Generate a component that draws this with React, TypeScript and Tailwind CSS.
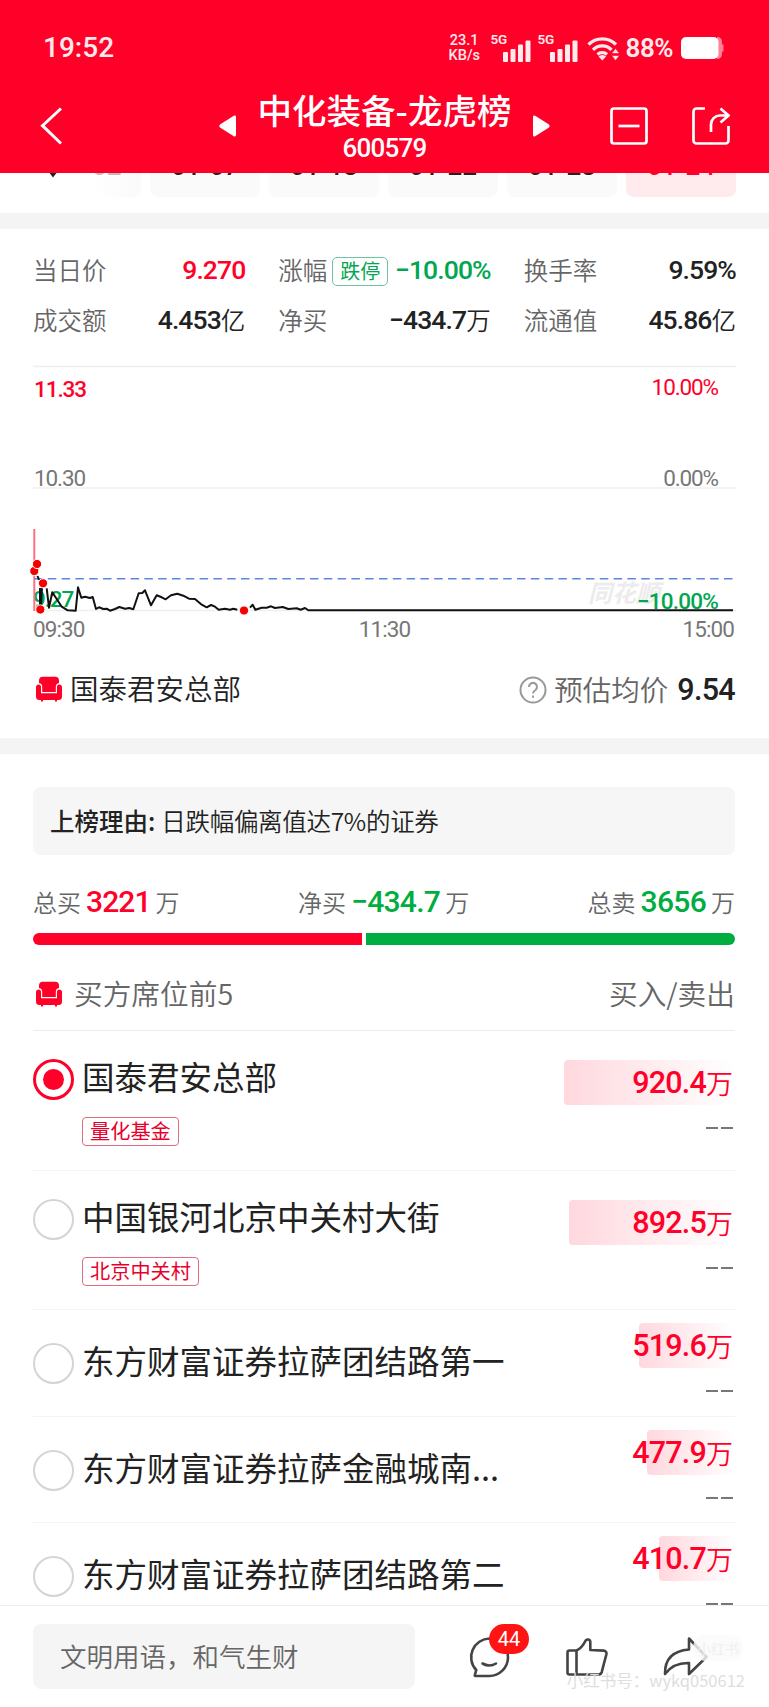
import { ReactNode } from "react";

type Seat = {
  name: string;
  amount: string;
  barWidth: number;
  tag?: string;
  checked?: boolean;
};

const seats: Seat[] = [
  { name: "国泰君安总部", amount: "920.4", barWidth: 171, tag: "量化基金", checked: true },
  { name: "中国银河北京中关村大街", amount: "892.5", barWidth: 166, tag: "北京中关村" },
  { name: "东方财富证券拉萨团结路第一", amount: "519.6", barWidth: 96 },
  { name: "东方财富证券拉萨金融城南...", amount: "477.9", barWidth: 88 },
  { name: "东方财富证券拉萨团结路第二", amount: "410.7", barWidth: 76 },
];

const dates = ["01-07", "01-13", "01-22", "01-23"];

const Num = ({ className = "", children }: { className?: string; children: ReactNode }) => (
  <span className={`[font-family:Roboto,sans-serif] font-medium ${className}`}>
    {children}
  </span>
);

const SofaIcon = () => (
  <svg width="26" height="26" viewBox="0 0 26 26" fill="#ff0029">
    <path d="M3 7V4.5A3.8 3.8 0 0 1 6.8.7h12.400A3.800 3.800 0 0 1 23 4.500V7a4 4 0 0 0-3.200 4v5H6.200v-5A4 4 0 0 0 3 7Z" />
    <path d="M2.800 8.500C4.300 8.500 5 9.700 5 11v6.300h16V11c0-1.300.7-2.500 2.300-2.500S26 9.700 26 11v9.500a3.500 3.500 0 0 1-3.500 3.500H21v1.500h-2V24H7v1.500H5V24H3.500A3.500 3.500 0 0 1 0 20.500V11c0-1.300 1.200-2.500 2.800-2.500Z" />
  </svg>
);

const SignalIcon = () => (
  <div className="relative h-[28px] w-[40px]">
    <Num className="absolute left-0 top-0 text-[13.500px] font-semibold leading-[11px] tracking-[-0.300px]">5G</Num>
    <svg className="absolute bottom-0 right-0" width="28" height="22" viewBox="0 0 28 22" fill="#fff" opacity=".92">
      <rect x="0" y="12" width="5" height="10" rx="1" />
      <rect x="7.500" y="9" width="5" height="13" rx="1" />
      <rect x="15" y="4.500" width="5" height="17.500" rx="1" />
      <rect x="22.500" y="0.500" width="5" height="21.500" rx="1" />
    </svg>
  </div>
);

const StatusBar = () => (
  <div className="flex h-[96px] items-center pl-[43px] pr-[44px] text-[#ffe9ec]">
    <Num className="text-[28px]">19:52</Num>
    <div className="ml-auto flex items-center">
      <Num className="mr-[11px] w-[31px] text-center text-[14.500px] font-bold leading-[15px]">
        23.1
        <br />
        KB/s
      </Num>
      <SignalIcon />
      <div className="w-[7px]" />
      <SignalIcon />
      <svg className="ml-[9px]" width="33" height="25" viewBox="0 0 33 25" fill="none" stroke="#ffe9ec" strokeWidth="3.200">
        <path d="M1.500 8.500a19.500 19.500 0 0 1 27.500 0" />
        <path d="M6 13.800a13 13 0 0 1 18.500 0" />
        <path d="M10.500 18.500a6.800 6.800 0 0 1 9.500 0" />
        <path d="m11.500 20.500 3.800 4 3.800-4a5.400 5.400 0 0 0-7.600 0Z" fill="#ffe9ec" stroke="none" />
        <path d="m28.500 12.500 4 5h-8Zm0 12-4-5h8Z" fill="#ffe9ec" stroke="#ff0029" strokeWidth=".6" />
      </svg>
      <Num className="ml-[6px] text-[26px] font-semibold tracking-[-0.500px]">88%</Num>
      <svg className="ml-[8px]" width="44" height="24" viewBox="0 0 44 24">
        <path d="M36 1h1a5 5 0 0 1 4 5v2.500h1.500v7H41V18a5 5 0 0 1-4 5h-1Z" fill="#ff8095" />
        <rect x="0" y="1" width="37.500" height="22" rx="5" fill="#fff" />
      </svg>
    </div>
  </div>
);

const Header = () => (
  <header className="h-[173px] bg-[#ff0029] text-white">
    <StatusBar />
    <div className="flex h-[60px] items-center pl-[40px] pr-[39px]">
      <svg width="22" height="38" viewBox="0 0 22 38" fill="none" stroke="#fff" strokeWidth="3">
        <path d="M21 1.500 2.500 18.700 21 36.500" />
      </svg>
      <svg className="ml-[157px]" width="18" height="22" viewBox="0 0 18 22" fill="#fff">
        <path d="M1 9.600 14.800.8Q17 0 17 2v18q0 2-2.200 1.200L1 12.400q-1.400-1.400 0-2.800Z" />
      </svg>
      <div className="ml-[21px] flex w-[253px] flex-col items-center whitespace-nowrap">
        <h1 className="text-[34.500px] font-medium leading-[42px]">中化装备-龙虎榜</h1>
        <Num className="mt-[2px] text-[26px] leading-[32px] tracking-[-0.800px]">600579</Num>
      </div>
      <svg className="ml-[22px]" width="18" height="22" viewBox="0 0 18 22" fill="#fff">
        <path d="M16 9.600 2.200.8Q0 0 0 2v18q0 2 2.200 1.200L16 12.400q1.400-1.400 0-2.800Z" />
      </svg>
      <svg className="ml-auto" width="38" height="38" viewBox="0 0 38 38" fill="none" stroke="#fff" strokeWidth="2.700">
        <rect x="1.500" y="1.500" width="35" height="35" rx="2.500" />
        <path d="M8.500 19h21" />
      </svg>
      <svg className="ml-[44px]" width="38" height="38" viewBox="0 0 38 38" fill="none" stroke="#fff" strokeWidth="2.700">
        <path d="M13 1.500H4.500a3 3 0 0 0-3 3v29a3 3 0 0 0 3 3h29a3 3 0 0 0 3-3V19" />
        <path d="M19 25v-7.500a9 9 0 0 1 9-9h8.500M28.500 1.500l8 7-8 7" />
      </svg>
    </div>
  </header>
);

const DateTabs = () => (
  <div className="flex h-[40px] overflow-hidden">
    <div className="-mt-[39px] flex h-[63px] w-full pl-[33px] text-[26px] text-[#222]">
      <div className="flex w-[59px] items-center pl-[14px]">
        <svg className="mt-[4px]" width="12" height="22" viewBox="0 0 14 24" fill="#222">
          <path d="M0 14h14l-7 9Z" />
        </svg>
      </div>
      <div className="flex w-[49px] items-center rounded-r-lg bg-linear-to-r from-white to-[#fafafa] text-[#bbb]">
        <Num>02</Num>
      </div>
      {dates.map((date) => (
        <div
          key={date}
          className="ml-[9px] flex w-[110px] items-center justify-center rounded-lg bg-[#fafafa]"
        >
          <Num>{date}</Num>
        </div>
      ))}
      <div className="ml-[9px] flex w-[110px] items-center justify-center rounded-lg bg-[#ffebee] text-[#ff0029]">
        <Num>01-24</Num>
      </div>
    </div>
  </div>
);

const Stat = ({ label, children }: { label: ReactNode; children: ReactNode }) => (
  <div className="flex h-[50px] items-center justify-between whitespace-nowrap">
    <span className="flex items-center font-[350] text-[#666]">{label}</span>
    <span className="flex items-center text-[#222]">{children}</span>
  </div>
);

const Stats = () => (
  <div className="grid grid-cols-3 gap-x-[33px] pl-[33px] pr-[33px] pt-[16px] text-[24.500px]">
    <Stat label="当日价">
      <Num className="text-[26.500px] tracking-[-0.900px] text-[#ff0029]">9.270</Num>
    </Stat>
    <Stat
      label={
        <>
          涨幅
          <span className="ml-[5px] mt-[2px] flex h-[29px] w-[56px] items-center justify-center rounded-[5px] border border-[#6bc5a5] text-[20px] font-normal text-[#00a650]">
            跌停
          </span>
        </>
      }
    >
      <Num className="text-[26.500px] tracking-[-0.900px] text-[#00a650]">−10.00%</Num>
    </Stat>
    <Stat label="换手率">
      <Num className="text-[26.500px] tracking-[-0.900px]">9.59%</Num>
    </Stat>
    <Stat label="成交额">
      <Num className="text-[26.500px] tracking-[-0.900px]">4.453</Num>
      <span className="font-[350]">亿</span>
    </Stat>
    <Stat label="净买">
      <Num className="text-[26.500px] tracking-[-0.900px]">−434.7</Num>
      <span className="font-[350]">万</span>
    </Stat>
    <Stat label="流通值">
      <Num className="text-[26.500px] tracking-[-0.900px]">45.86</Num>
      <span className="font-[350]">亿</span>
    </Stat>
  </div>
);

const PriceChart = () => (
  <svg width="769" height="307" viewBox="0 345 769 307" className="block [font-family:Roboto,sans-serif]">
    <path d="M33 366.500h703M33 488h703M33 610.500h703" stroke="#efefef" strokeWidth="1.500" />
    <g fontSize="22.500" letterSpacing="-1.1">
      <text x="34" y="396.500" fill="#ff0029" fontWeight="500">11.33</text>
      <text x="718" y="395" fill="#ff0029" textAnchor="end">10.00%</text>
      <text x="34" y="486" fill="#777">10.30</text>
      <text x="718" y="486" fill="#777" textAnchor="end">0.00%</text>
      <text x="33" y="607" fill="#00a650" fontWeight="500">9.27</text>
      <text
        x="588"
        y="602"
        fill="#ececec"
        fontSize="24"
        fontWeight="700"
        letterSpacing="0"
        className="italic [font-family:'Noto_Sans_CJK_SC',sans-serif]"
      >
        同花顺
      </text>
      <text x="718" y="608.500" fill="#00a650" textAnchor="end" letterSpacing="-.8" fontWeight="500">−10.00%</text>
      <text x="33" y="637" fill="#777" letterSpacing="-.9">09:30</text>
      <text x="384.500" y="637" fill="#777" textAnchor="middle" letterSpacing="-.9">11:30</text>
      <text x="734" y="637" fill="#777" textAnchor="end" letterSpacing="-.9">15:00</text>
    </g>
    <path d="M34.300 529v82" stroke="#ff6f83" strokeWidth="2" />
    <path d="M34 578.700h701" stroke="#5e86dc" strokeWidth="1.400" strokeDasharray="8.500 5.300" />
    <g fill="none" stroke="#111" strokeWidth="2" strokeLinejoin="round">
      <path d="M37.500 576l1.500 4M40 588v18M42 588l-1 18" />
      <polyline points="46.700,588.300 49,607.700 52.300,592.300 56.700,599 61.700,606.700 67.700,610.300 75.700,610.700 78,587.300 81.300,597.700 85,596.700 90,598 92.700,597 96,609 99,607.300 103.300,609 106.700,608.700 110,610.700 115,609 119.300,607 125,608.700 129.300,608 133.300,609.300 138.700,593.300 142.300,593 145,590.300 151,605.300 156.700,595.300 161.700,597.300 165.700,599.300 171,595.300 177.300,593.700 183.300,595.700 189,598.700 195,599 201.700,604.700 206.700,607.300 211,605 215,606.700 218.700,609.700 225,608.700 230,609.700 233.300,608.700 237.300,609.700" />
      <polyline points="250,607.700 252.700,604.700 255.300,609.700 261.700,607.700 266.700,607.700 271,606.300 275,608 282.700,607 288.300,609 296.700,608.300 300.700,609.700 305,608 308.300,610.300 733,610.300" />
    </g>
    <g fill="#f40000" stroke="#fff" strokeWidth="1">
      <circle cx="34.300" cy="571" r="4.600" />
      <circle cx="37" cy="564" r="4.600" />
      <circle cx="43" cy="583.300" r="4.600" />
      <circle cx="40.300" cy="609.500" r="4.600" />
      <circle cx="244" cy="610.500" r="4.600" />
    </g>
  </svg>
);

const Totals = () => (
  <>
    <div className="mt-[20px] flex h-[54px] items-center justify-between text-[24px] font-[350] text-[#666]">
      <div className="flex items-center">
        总买
        <Num className="ml-[5px] mr-[5px] text-[30px] tracking-[-0.900px] text-[#ff0029]">3221</Num>
        万
      </div>
      <div className="flex items-center">
        净买
        <Num className="ml-[5px] mr-[5px] text-[30px] tracking-[-0.700px] text-[#00ad40]">−434.7</Num>
        万
      </div>
      <div className="flex items-center">
        总卖
        <Num className="ml-[5px] mr-[5px] text-[30px] tracking-[-0.700px] text-[#00ad40]">3656</Num>
        万
      </div>
    </div>
    <div className="mt-[4px] flex h-[12px] gap-[4px]">
      <div className="w-[329px] rounded-l-full bg-[#ff0029]" />
      <div className="flex-1 rounded-r-full bg-[#00ad40]" />
    </div>
  </>
);

const Radio = ({ checked }: { checked?: boolean }) =>
  checked ? (
    <div className="flex size-[41px] items-center justify-center rounded-full border-[3px] border-[#ff0029]">
      <div className="size-[21px] rounded-full bg-[#ff0029]" />
    </div>
  ) : (
    <div className="size-[41px] rounded-full border-2 border-[#d4d4d4]" />
  );

const SeatRow = ({ seat }: { seat: Seat }) => (
  <div
    className={`flex justify-between border-b border-[#f3f3f3] ${
      seat.tag ? "h-[139.500px] pt-[28px]" : "h-[106.500px] pt-[12px]"
    }`}
  >
    <div className={`flex ${seat.tag ? "" : "pt-[21px]"}`}>
      <Radio checked={seat.checked} />
      <div className="-mt-[2px] ml-[8px] flex flex-col items-start">
        <span className="whitespace-nowrap text-[32.500px] font-normal leading-[38px] text-[#222]">
          {seat.name}
        </span>
        {seat.tag && (
          <span className="mt-[22px] flex h-[29px] items-center rounded border border-[#e06c80] px-[7px] text-[20.200px] leading-none text-[#e8002c]">
            {seat.tag}
          </span>
        )}
      </div>
    </div>
    <div className="flex flex-col items-end pt-px">
      <div
        className="flex h-[45px] items-center justify-end rounded-[4px] bg-linear-to-r from-[#ffd8de] to-white pr-[2px] text-[#ff0029]"
        style={{ width: seat.barWidth }}
      >
        <Num className="mt-[2px] text-[30.500px] tracking-[-0.800px]">{seat.amount}</Num>
        <span className="text-[27px] font-[350]">万</span>
      </div>
      <div className="mr-[2px] mt-[22px] flex gap-[3px]">
        <div className="h-[2px] w-[12px] bg-[#777]" />
        <div className="h-[2px] w-[12px] bg-[#777]" />
      </div>
    </div>
  </div>
);

const BottomBar = () => (
  <footer className="relative flex h-[102px] border-t border-[#f0f0f0] bg-white pl-[33px] pt-[18px]">
    <div className="flex h-[65px] w-[382px] items-center rounded-lg bg-[#f5f5f5] pl-[27px] text-[26.500px] font-[350] text-[#666]">
      文明用语，和气生财
    </div>
    <div className="relative ml-[54px] mt-[12px] size-[42px]">
      <svg width="42" height="42" viewBox="0 0 42 42" fill="none" stroke="#444" strokeWidth="2.600">
        <path d="M20.500 2.500a18.700 18.700 0 1 1-.500 37.500H6.500q-1.200 0-.6-1.200l1.300-4.800A18.700 18.700 0 0 1 20.500 2.500Z" />
        <path d="M13.500 27.500q7 4 13.500 0" strokeLinecap="round" />
      </svg>
      <div className="absolute -top-[12px] left-[20px] flex h-[30px] w-[40px] items-center justify-center rounded-full bg-[#ff1414] text-[20px] text-white">
        <Num className="font-normal">44</Num>
      </div>
    </div>
    <svg className="ml-[55px] mt-[14px]" width="42" height="38" viewBox="0 0 42 38" fill="none" stroke="#444" strokeWidth="2.600" strokeLinejoin="round">
      <path d="M10.500 12.500H3.500a2 2 0 0 0-2 2v20a2 2 0 0 0 2 2h29q2.500 0 3.200-2.400l4.600-17.500q.8-3.500-2.500-4l-13.500-.600V4a2.600 2.600 0 0 0-4.800-1.300Q16 10 10.500 12.500Zm0 0v24" />
    </svg>
    <svg className="ml-[55px] mt-[12px]" width="46" height="41" viewBox="0 0 46 41" fill="none" stroke="#444" strokeWidth="2.600" strokeLinejoin="round">
      <path d="M26 2.500 43.500 21 26 38V27Q10.500 26.500 2 38 1.500 15.500 26 13.500Z" />
    </svg>
    <div className="absolute right-[26px] top-[29px] flex h-[26px] w-[50px] items-center justify-center rounded-full bg-[#fafafa]/80 text-[14px] text-[#f0f0f0]">
      小红书
    </div>
    <div className="absolute right-[24px] top-[64px] whitespace-nowrap text-[16.500px] leading-[20px] text-[#dedede]">
      小红书号：wykq050612
    </div>
  </footer>
);

const App = () => {
  return (
    <div className="flex h-[1707px] w-[769px] flex-col overflow-hidden bg-white leading-none [font-family:'Noto_Sans_CJK_SC',sans-serif]">
      <Header />
      <DateTabs />
      <div className="h-[16px] shrink-0 bg-[#f4f4f4]" />

      <section className="h-[509px] shrink-0">
        <Stats />
        <PriceChart />
        <div className="mt-[20px] flex h-[34px] items-center justify-between pl-[36px] pr-[34px] text-[28.500px]">
          <div className="flex items-center gap-[8px] text-[#222]">
            <SofaIcon />
            <span className="-mt-[2px] font-[350]">国泰君安总部</span>
          </div>
          <div className="flex items-center font-[350] text-[#666]">
            <svg className="mr-[7px] mt-[2px]" width="28" height="28" viewBox="0 0 28 28" fill="none" stroke="#999" strokeWidth="2">
              <circle cx="14" cy="14" r="12.500" />
              <path d="M10 11a4 4 0 1 1 6.500 3Q14 15.500 14 17.500M14 19.500v2.300" />
            </svg>
            <span>预估均价</span>
            <Num className="ml-[9px] mt-[2px] text-[30.500px] tracking-[-0.700px] text-[#222]">9.54</Num>
          </div>
        </div>
      </section>

      <div className="h-[16px] shrink-0 bg-[#f4f4f4]" />

      {/* Seats list, runs under the bottom bar */}
      <section className="h-[851px] shrink-0 overflow-hidden pl-[33px] pr-[34px] pt-[33px]">
        <div className="flex h-[68px] items-center rounded-lg bg-[#f6f6f6] pl-[17px] text-[24.500px] text-[#222]">
          <span className="font-medium">上榜理由:</span>
          <span className="ml-[6px] font-[350] tracking-[-0.300px]">日跌幅偏离值达7%的证券</span>
        </div>
        <Totals />
        <div className="mt-[32px] flex h-[34px] items-center justify-between pl-[3px] text-[28.700px] font-[350] text-[#666]">
          <div className="flex items-center gap-[12px]">
            <SofaIcon />
            <span className="-mt-[2px]">买方席位前5</span>
          </div>
          <span className="-mt-[2px]">买入/卖出</span>
        </div>
        <div className="mt-[19px] border-t border-[#ebebeb]">
          {seats.map((seat) => (
            <SeatRow key={seat.name} seat={seat} />
          ))}
        </div>
      </section>

      <BottomBar />
    </div>
  );
};

export default App;
